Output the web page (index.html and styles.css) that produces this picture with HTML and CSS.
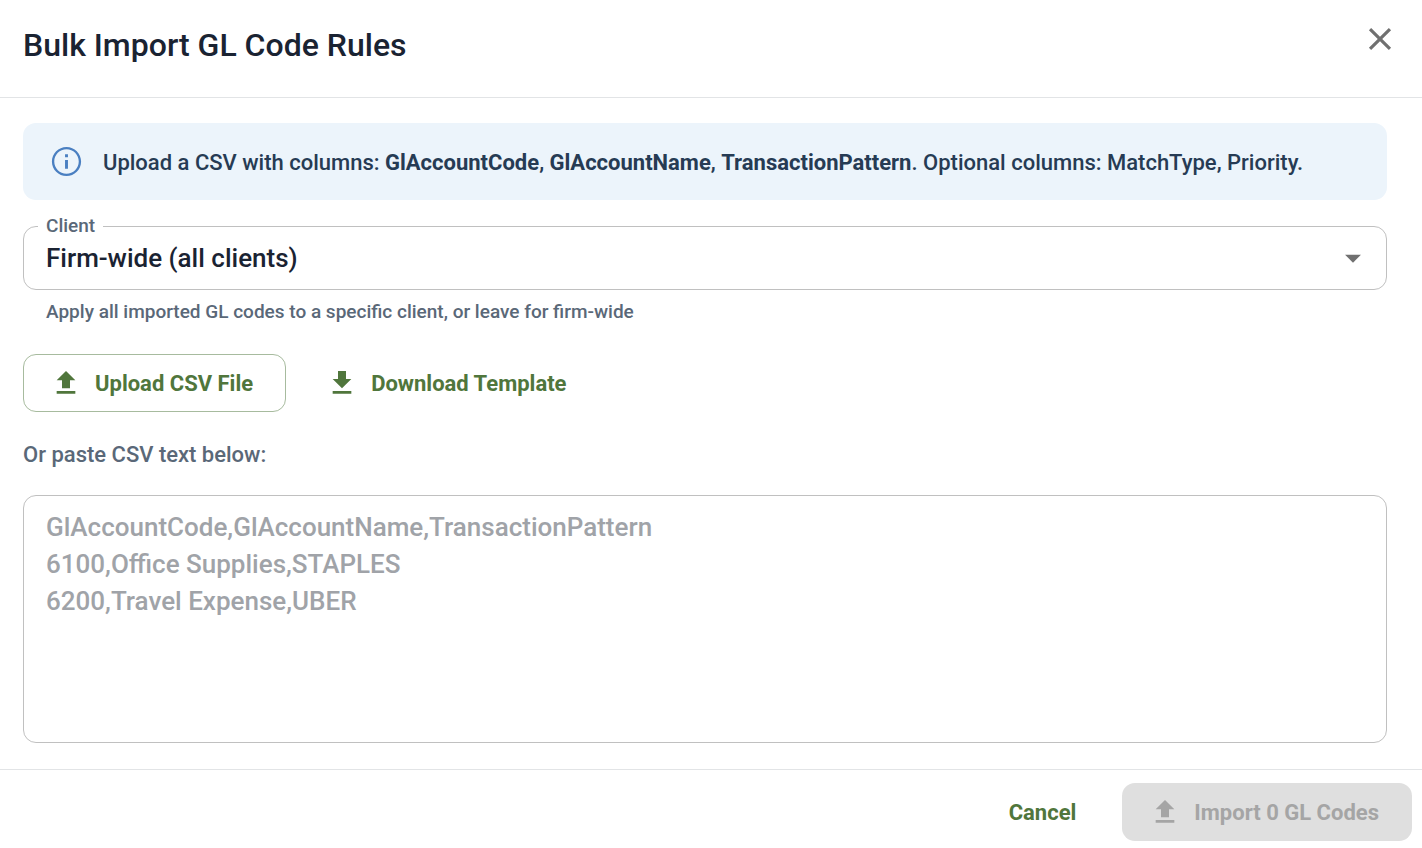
FILE: index.html
```html
<!DOCTYPE html>
<html lang="en">
<head>
    <meta charset="UTF-8">
    <meta name="viewport" content="width=device-width, initial-scale=1.0">
    <title>Bulk Import GL Code Rules</title>
    <link rel="stylesheet" href="styles.css">
</head>
<body>
    <div class="dialog" role="dialog" aria-labelledby="dialog-title">
        <header class="dialog-header">
            <h1 id="dialog-title">Bulk Import GL Code Rules</h1>
            <button class="close-btn" type="button" aria-label="Close">
                <svg class="close-icon" viewBox="0 0 24 24"><path d="M19 6.41 17.59 5 12 10.59 6.41 5 5 6.41 10.59 12 5 17.59 6.41 19 12 13.41 17.59 19 19 17.59 13.41 12z"/></svg>
            </button>
        </header>

        <main class="dialog-content">
            <div class="alert">
                <svg class="alert-icon" viewBox="0 0 24 24"><path d="M11 7h2v2h-2zM11 11h2v6h-2zM12 2C6.48 2 2 6.48 2 12s4.48 10 10 10 10-4.48 10-10S17.52 2 12 2zm0 18.400c-4.640 0-8.400-3.760-8.400-8.400s3.760-8.400 8.400-8.400 8.400 3.760 8.400 8.400-3.760 8.400-8.400 8.400z"/></svg>
                <p>Upload a CSV with columns: <strong>GlAccountCode</strong>, <strong>GlAccountName</strong>, <strong>TransactionPattern</strong>. Optional columns: MatchType, Priority.</p>
            </div>

            <div class="field">
                <div class="select-wrap">
                    <label for="client">Client</label>
                    <select id="client" aria-describedby="client-help">
                        <option>Firm-wide (all clients)</option>
                    </select>
                    <svg class="select-arrow" viewBox="0 0 24 24"><path d="m7 10 5 5 5-5z"/></svg>
                </div>
                <p class="helper" id="client-help">Apply all imported GL codes to a specific client, or leave for firm-wide</p>
            </div>

            <div class="actions">
                <button class="btn btn-with-icon btn-outlined" type="button">
                    <svg class="btn-icon" viewBox="0 0 24 24"><path d="M5 20h14v-2H5zm0-10h4v6h6v-6h4l-7-7z"/></svg>
                    Upload CSV File
                </button>
                <button class="btn btn-with-icon" type="button">
                    <svg class="btn-icon" viewBox="0 0 24 24"><path d="M5 20h14v-2H5zM19 9h-4V3H9v6H5l7 7z"/></svg>
                    Download Template
                </button>
            </div>

            <label class="paste-label" for="csv-text">Or paste CSV text below:</label>
            <textarea id="csv-text" class="csv-text" placeholder="GlAccountCode,GlAccountName,TransactionPattern
6100,Office Supplies,STAPLES
6200,Travel Expense,UBER"></textarea>
        </main>

        <footer class="dialog-footer">
            <button class="btn" type="button">Cancel</button>
            <button class="btn btn-with-icon btn-contained" type="button" disabled>
                <svg class="btn-icon" viewBox="0 0 24 24"><path d="M5 20h14v-2H5zm0-10h4v6h6v-6h4l-7-7z"/></svg>
                Import 0 GL Codes
            </button>
        </footer>
    </div>
</body>
</html>
```
FILE: styles.css
```css
* {
    box-sizing: border-box;
}

body {
    margin: 0;
    font-family: Roboto, sans-serif;
    font-weight: 500;
    color: #1a2332;
    background: #fff;
}

h1,
p {
    margin: 0;
}

button,
select,
textarea {
    font-family: inherit;
}

svg {
    fill: currentColor;
    flex-shrink: 0;
}

.dialog {
    display: flex;
    flex-direction: column;
    min-height: 100vh;
}

.dialog-header {
    display: flex;
    justify-content: space-between;
    align-items: flex-start;
    padding: 20px 23px 26px;
    border-bottom: 1px solid #e2e4e6;
}

h1 {
    font-size: 32px;
    font-weight: 500;
    line-height: 51px;
}

.close-btn {
    display: flex;
    padding: 0;
    border: none;
    background: none;
    color: #707070;
    cursor: pointer;
}

.close-icon {
    width: 38px;
    height: 38px;
}

.dialog-content {
    flex: 1;
    display: flex;
    flex-direction: column;
    padding: 25px 35px 26px 23px;
}

.alert {
    display: flex;
    align-items: center;
    gap: 19px;
    padding: 19px 26px;
    border-radius: 13px;
    background: #ecf4fb;
    color: #263b54;
    font-size: 22px;
    line-height: 37px;
}

.alert p {
    padding-top: 2px;
}

.alert strong {
    font-weight: 700;
}

.alert-icon {
    width: 35px;
    height: 35px;
    color: #4a7fc1;
}

.field {
    margin-top: 26px;
}

.select-wrap {
    position: relative;
}

.select-wrap label {
    position: absolute;
    top: -13px;
    left: 15px;
    padding: 0 8px;
    background: #fff;
    color: #5a6878;
    font-size: 19px;
    line-height: 26px;
}

.select-wrap select {
    display: block;
    width: 100%;
    height: 64px;
    padding: 0 60px 0 22px;
    border: 1px solid #c0c0c0;
    border-radius: 13px;
    appearance: none;
    background: #fff;
    color: #1a2332;
    font-size: 26px;
    font-weight: 500;
}

.select-arrow {
    position: absolute;
    top: 13px;
    right: 15px;
    width: 38px;
    height: 38px;
    color: #707070;
    pointer-events: none;
}

.helper {
    margin-top: 6px;
    padding: 0 23px;
    color: #5a6878;
    font-size: 19px;
    line-height: 32px;
}

.actions {
    display: flex;
    gap: 13px;
    margin-top: 26px;
}

.btn {
    display: flex;
    align-items: center;
    gap: 13px;
    height: 58px;
    padding: 0 32px;
    border: 1px solid transparent;
    border-radius: 13px;
    background: none;
    color: #50763c;
    font-size: 22px;
    font-weight: 700;
    cursor: pointer;
}

.btn-with-icon {
    padding-left: 26px;
}

.btn-outlined {
    border-color: #a7bb9e;
}

.btn-icon {
    width: 32px;
    height: 32px;
}

.btn-contained {
    background: #dfdfdf;
    color: #a5a5a5;
    cursor: default;
}

.paste-label {
    margin: 24px 0 22px;
    color: #5a6878;
    font-size: 22px;
    line-height: 37px;
}

.csv-text {
    flex: 1;
    min-height: 160px;
    padding: 13px 22px;
    border: 1px solid #c0c0c0;
    border-radius: 13px;
    resize: none;
    color: #1a2332;
    font-size: 26px;
    font-weight: 500;
    line-height: 37px;
}

.csv-text::placeholder {
    color: #a0a3a8;
}

.dialog-footer {
    display: flex;
    justify-content: flex-end;
    gap: 13px;
    padding: 13px 10px 7px;
    border-top: 1px solid #e2e4e6;
}
```
